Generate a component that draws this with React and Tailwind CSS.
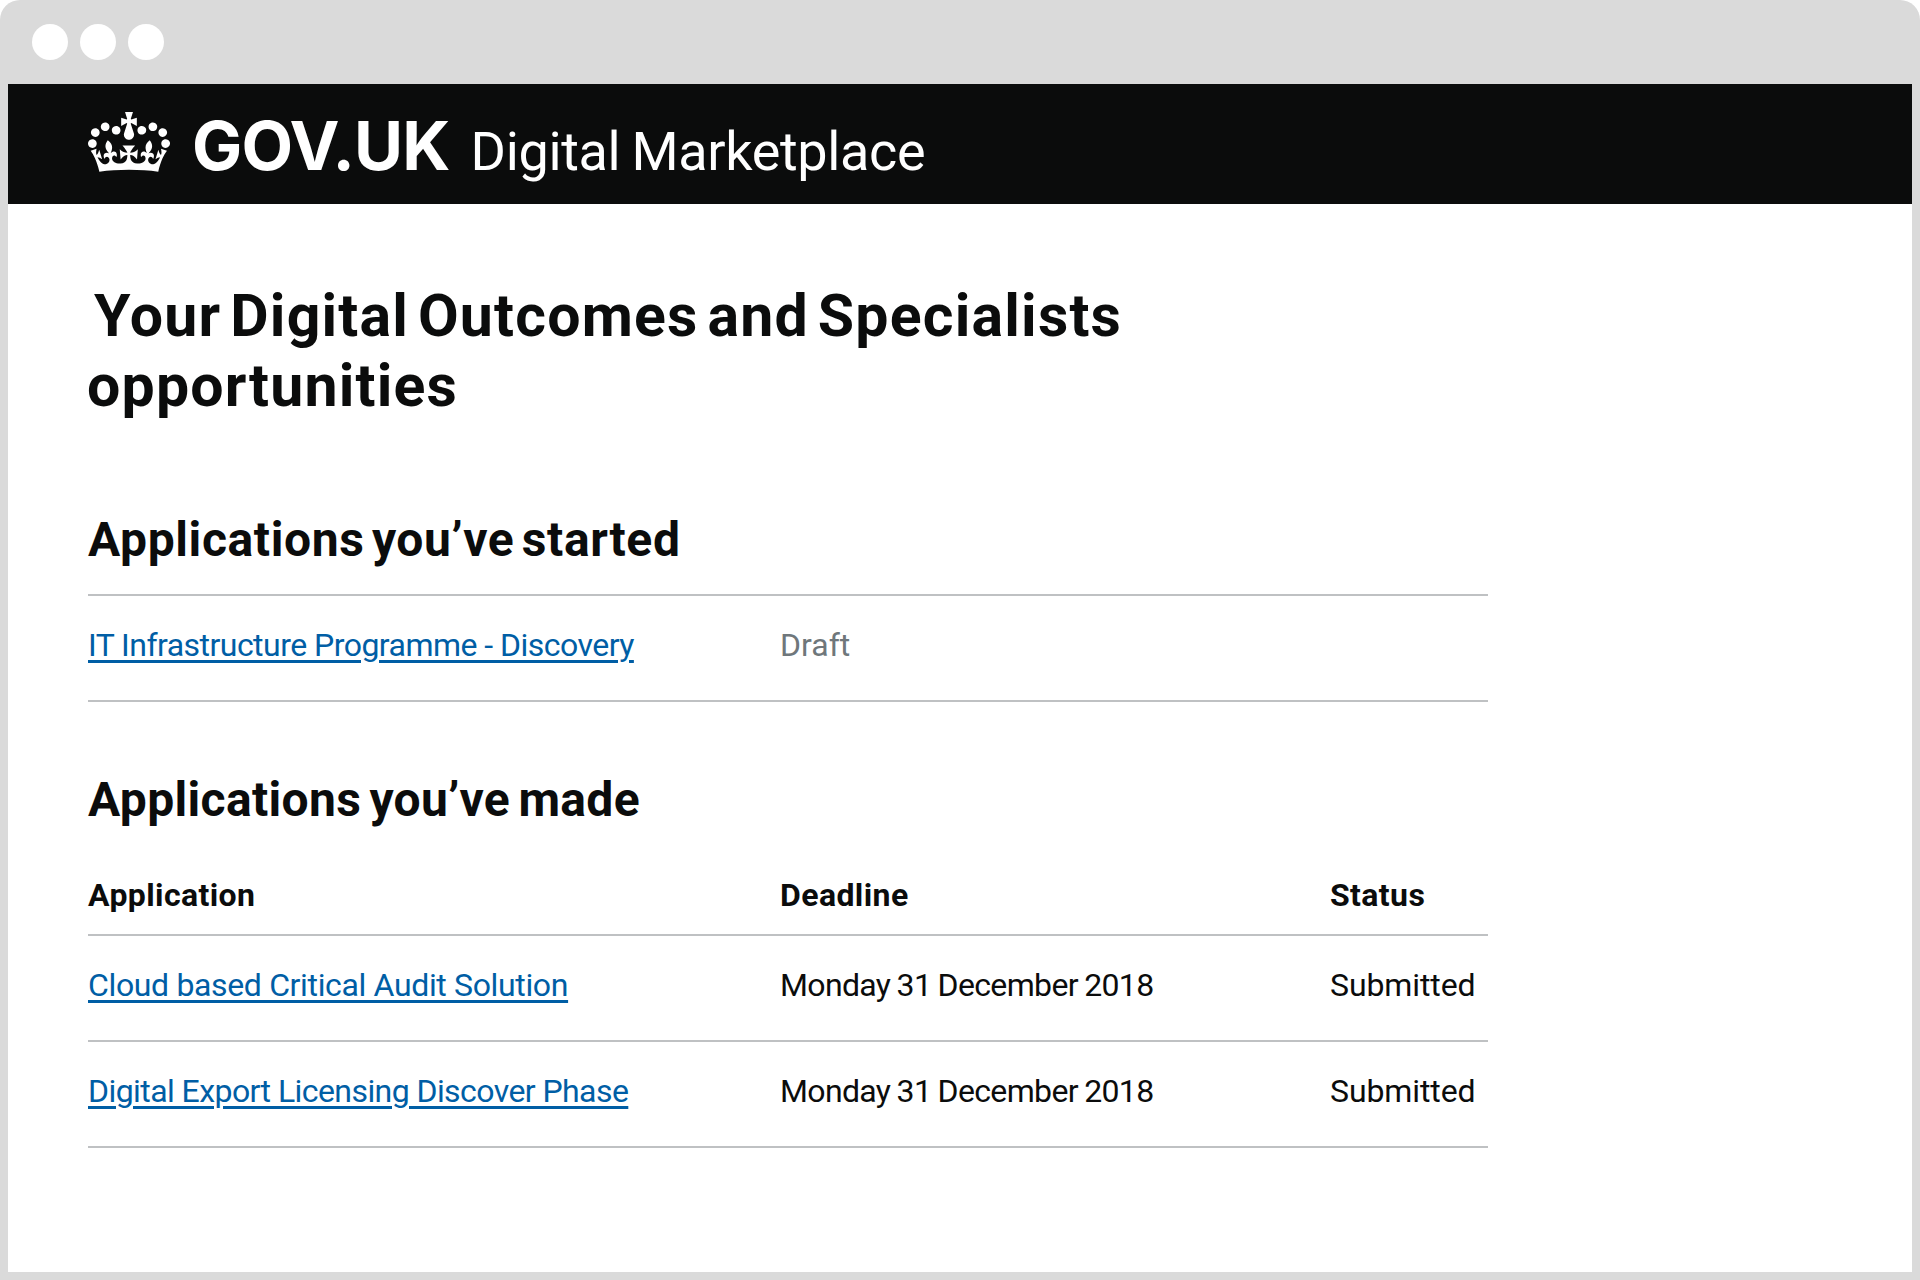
const CROWN_PATH =
  "M25 30.2c3.5 1.5 7.7-.2 9.1-3.7 1.5-3.6-.2-7.8-3.9-9.2-3.6-1.4-7.6.3-9.1 3.9-1.4 3.5.3 7.5 3.9 9zM9 39.5c3.6 1.5 7.8-.2 9.2-3.7 1.5-3.6-.2-7.8-3.9-9.1-3.6-1.5-7.6.2-9.1 3.8-1.4 3.5.3 7.5 3.8 9zM4.4 57.2c3.5 1.5 7.7-.2 9.1-3.8 1.5-3.6-.2-7.7-3.9-9.1-3.5-1.5-7.6.3-9.1 3.8-1.4 3.5.3 7.6 3.9 9.1zm38.3-21.4c3.5 1.5 7.7-.2 9.1-3.8 1.5-3.6-.2-7.7-3.9-9.1-3.6-1.5-7.6.3-9.1 3.8-1.3 3.6.4 7.7 3.9 9.1zm64.4-5.6c-3.6 1.5-7.8-.2-9.1-3.7-1.5-3.6.2-7.8 3.8-9.2 3.6-1.4 7.7.3 9.2 3.9 1.3 3.5-.4 7.5-3.9 9zm15.9 9.3c-3.6 1.5-7.7-.2-9.1-3.7-1.5-3.6.2-7.8 3.7-9.1 3.6-1.5 7.7.2 9.2 3.8 1.5 3.5-.3 7.5-3.8 9zm4.7 17.7c-3.6 1.5-7.8-.2-9.2-3.8-1.5-3.6.2-7.7 3.9-9.1 3.6-1.5 7.7.3 9.2 3.8 1.3 3.5-.4 7.6-3.9 9.1zM89.3 35.8c-3.6 1.5-7.8-.2-9.2-3.8-1.4-3.6.2-7.7 3.9-9.1 3.6-1.5 7.7.3 9.2 3.8 1.4 3.6-.3 7.7-3.9 9.1zM69.7 17.7l8.9 4.7V9.3l-8.9 2.8c-.2-.3-.5-.6-.9-.9L72.4 0H59.6l3.5 11.2c-.3.3-.6.5-.9.9l-8.8-2.8v13.1l8.8-4.7c.3.3.6.7.9.9l-5 15.4v.1c-.2.8-.4 1.6-.4 2.4 0 4.1 3.1 7.5 7 8.1h.2c.3 0 .7.1 1 .1.4 0 .7 0 1-.1h.2c4-.6 7.1-4.1 7.1-8.1 0-.8-.1-1.7-.4-2.4V34l-5.1-15.4c.4-.2.7-.6 1-.9zM66 92.8c16.9 0 32.8 1.1 47.1 3.2 4-16.9 8.9-26.7 14-33.5l-9.6-3.4c1 4.9 1.1 7.2 0 10.2-1.5-1.4-3-4.3-4.2-8.7L108.6 76c2.8-2 5-3.2 7.5-3.3-4.4 9.4-10 11.9-13.6 11.2-4.3-.8-6.3-4.6-5.6-7.9 1-4.7 5.7-5.9 8-.5 4.3-8.7-3-11.4-7.6-8.8 7.1-7.2 7.9-13.5 2.1-21.1-8 6.1-8.1 12.3-4.5 20.8-4.7-5.4-12.1-2.5-9.5 6.2 3.4-5.2 7.9-2 7.2 3.1-.6 4.3-6.4 7.8-13.5 7.2-10.3-.9-10.9-8-11.2-13.8 2.5-.5 7.1 1.8 11 7.3L80.2 60c-4.1 4.4-8 5.3-12.3 5.4 1.4-4.4 8-11.6 8-11.6H55.5s6.4 7.2 7.9 11.6c-4.2-.1-8-1-12.3-5.4l1.4 16.4c3.9-5.5 8.5-7.7 10.9-7.3-.3 5.8-.9 12.8-11.1 13.8-7.2.6-12.9-2.9-13.5-7.2-.7-5 3.8-8.3 7.1-3.1 2.7-8.7-4.6-11.6-9.4-6.2 3.7-8.5 3.6-14.7-4.6-20.8-5.8 7.6-5 13.9 2.2 21.1-4.7-2.6-11.9.1-7.7 8.8 2.3-5.5 7.1-4.2 8.1.5.7 3.3-1.3 7.1-5.7 7.9-3.5.7-9-1.8-13.5-11.2 2.5.1 4.7 1.3 7.5 3.3l-4.7-15.4c-1.2 4.4-2.7 7.2-4.3 8.7-1.1-3-.9-5.3 0-10.2l-9.5 3.4c5 6.9 9.9 16.7 14 33.5 14.8-2.1 30.8-3.2 47.7-3.2z";

const COLUMNS = "grid grid-cols-[692px_550px_158px] whitespace-nowrap";

const submitted = [
  { name: "Cloud based Critical Audit Solution", tracking: "tracking-[-0.35px]" },
  { name: "Digital Export Licensing Discover Phase", tracking: "tracking-[-0.57px]" },
];

function Link({ children, tracking }) {
  return (
    <a
      href="#"
      className={`text-[#005ea5] underline decoration-[3px] underline-offset-[4px] ${tracking}`}
    >
      {children}
    </a>
  );
}

function Row({ children }) {
  return (
    <div className={`${COLUMNS} h-[106px] border-b-2 border-[#bfc1c3] pt-[29px] text-[32px] leading-[40px]`}>
      {children}
    </div>
  );
}

export default function App() {
  return (
    <div className="h-[1280px] w-[1920px] bg-white font-['Roboto',sans-serif] text-[#0b0c0c]">
      <div className="flex h-full flex-col rounded-t-[20px] bg-[#dadada] px-2 pb-2">
        <div className="flex h-[84px] shrink-0 gap-3 pl-6 pt-6">
          <span className="size-9 rounded-full bg-white" />
          <span className="size-9 rounded-full bg-white" />
          <span className="size-9 rounded-full bg-white" />
        </div>

        <header className="flex h-[120px] shrink-0 items-start bg-[#0b0c0c] pl-20 pt-7 text-white">
          <svg viewBox="0 0 132 97" className="h-[60.3px] w-[82px]" fill="currentColor" aria-hidden="true">
            <path d={CROWN_PATH} />
          </svg>
          <div className="ml-[22px] flex items-baseline gap-[21px] whitespace-nowrap">
            <span className="font-['Inter',sans-serif] text-[67px] font-bold leading-[68px] tracking-[-0.8px]">
              GOV.UK
            </span>
            <span className="text-[54px] leading-[68px] tracking-[-0.35px] [word-spacing:-2px]">
              Digital Marketplace
            </span>
          </div>
        </header>

        <main className="flex-1 bg-white pl-20 pt-[77px]">
          <h1 className="whitespace-nowrap text-[59px] font-bold leading-[70px]">
            <span className="block pl-[6px] tracking-[1.2px] [word-spacing:-7px]">
              Your Digital Outcomes and Specialists
            </span>
            <span className="-ml-px block tracking-[1.2px]">opportunities</span>
          </h1>

          <div className="w-[1400px]">
            <h2 className="mt-[95px] text-[48px] font-bold leading-[48px] tracking-[0.6px] [word-spacing:-5px]">
              Applications you’ve started
            </h2>
            <div className="mt-[30px] border-t-2 border-[#bfc1c3]">
              <Row>
                <div>
                  <Link tracking="tracking-[-0.53px]">IT Infrastructure Programme - Discovery</Link>
                </div>
                <div className="text-[#6f777b]">Draft</div>
              </Row>
            </div>

            <h2 className="mt-[74px] text-[48px] font-bold leading-[48px] tracking-[0.33px] [word-spacing:-4px]">
              Applications you’ve made
            </h2>
            <div
              className={`${COLUMNS} mt-[51px] border-b-2 border-[#bfc1c3] pb-[19px] text-[32px] font-bold leading-[40px] tracking-[0.4px]`}
            >
              <div>Application</div>
              <div>Deadline</div>
              <div>Status</div>
            </div>
            {submitted.map((item) => (
              <Row key={item.name}>
                <div>
                  <Link tracking={item.tracking}>{item.name}</Link>
                </div>
                <div className="tracking-[-0.65px] [word-spacing:-1px]">Monday 31 December 2018</div>
                <div className="tracking-[-0.1px]">Submitted</div>
              </Row>
            ))}
          </div>
        </main>
      </div>
    </div>
  );
}
